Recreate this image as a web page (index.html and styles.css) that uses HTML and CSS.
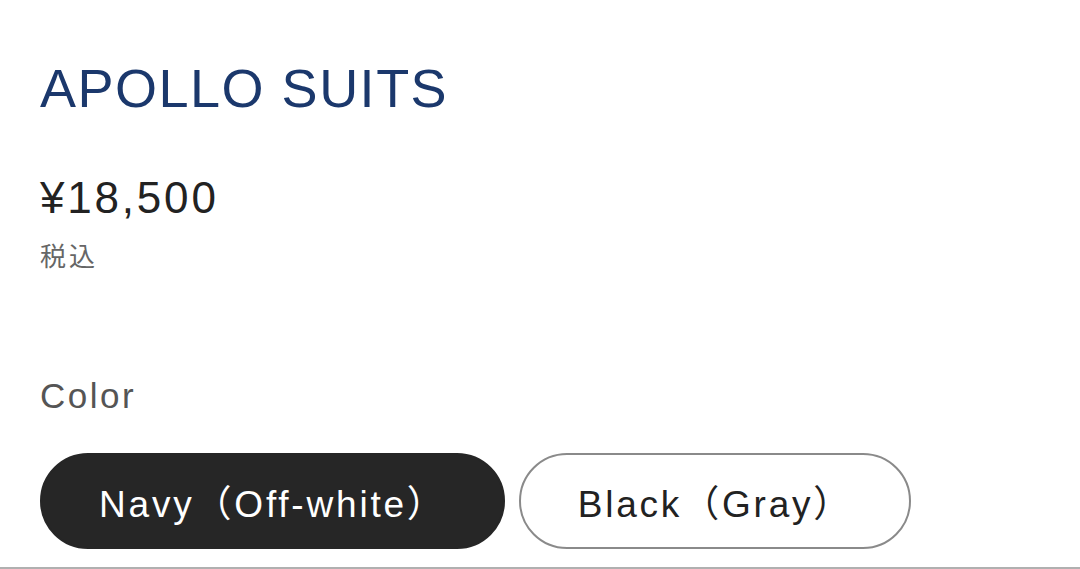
FILE: index.html
```html
<!DOCTYPE html>
<html lang="ja">
<head>
<meta charset="utf-8">
<link rel="stylesheet" href="styles.css">
</head>
<body>
<main class="product">
  <h1 class="title">APOLLO SUITS</h1>
  <div class="price">¥18,500</div>
  <div class="tax">税込</div>
  <div class="label">Color</div>
  <div class="options">
    <button class="opt opt-active">Navy（Off-white）</button>
    <button class="opt">Black（Gray）</button>
  </div>
</main>
<div class="rule"></div>
</body>
</html>
```
FILE: styles.css
```css
html, body {
  margin: 0;
  padding: 0;
  background: #fff;
}
body {
  width: 1080px;
  height: 569px;
  overflow: hidden;
  position: relative;
  font-family: "Liberation Sans", "Noto Sans CJK JP", sans-serif;
}
.product {
  padding: 61px 0 0 40px;
  display: flex;
  flex-direction: column;
  align-items: flex-start;
}
.title {
  margin: 0;
  font-weight: 400;
  font-size: 54px;
  line-height: 54px;
  letter-spacing: 1.5px;
  color: #1b386c;
}
.price {
  margin-top: 61px;
  font-size: 44px;
  line-height: 44px;
  letter-spacing: 2.8px;
  color: #222;
}
.tax {
  margin-top: 20px;
  font-family: "Noto Sans CJK JP", sans-serif;
  font-size: 26px;
  line-height: 30px;
  letter-spacing: 3px;
  color: #666;
}
.label {
  margin-top: 106px;
  font-size: 35px;
  line-height: 40px;
  letter-spacing: 2.5px;
  color: #555;
}
.options {
  margin-top: 37px;
  display: flex;
  gap: 14px;
}
.opt {
  height: 96px;
  padding: 0 56px 0 57px;
  border-radius: 48px;
  border: 2px solid #8a8a8a;
  background: #fff;
  color: #222;
  font-family: "Liberation Sans", "Noto Sans CJK JP", sans-serif;
  font-size: 37px;
  letter-spacing: 2.8px;
  display: flex;
  align-items: center;
}
.opt-active {
  background: #262626;
  border-color: #262626;
  color: #fff;
}
.rule {
  position: absolute;
  left: 0;
  right: 0;
  bottom: 0;
  height: 2px;
  background: #b0b0b0;
}
```
